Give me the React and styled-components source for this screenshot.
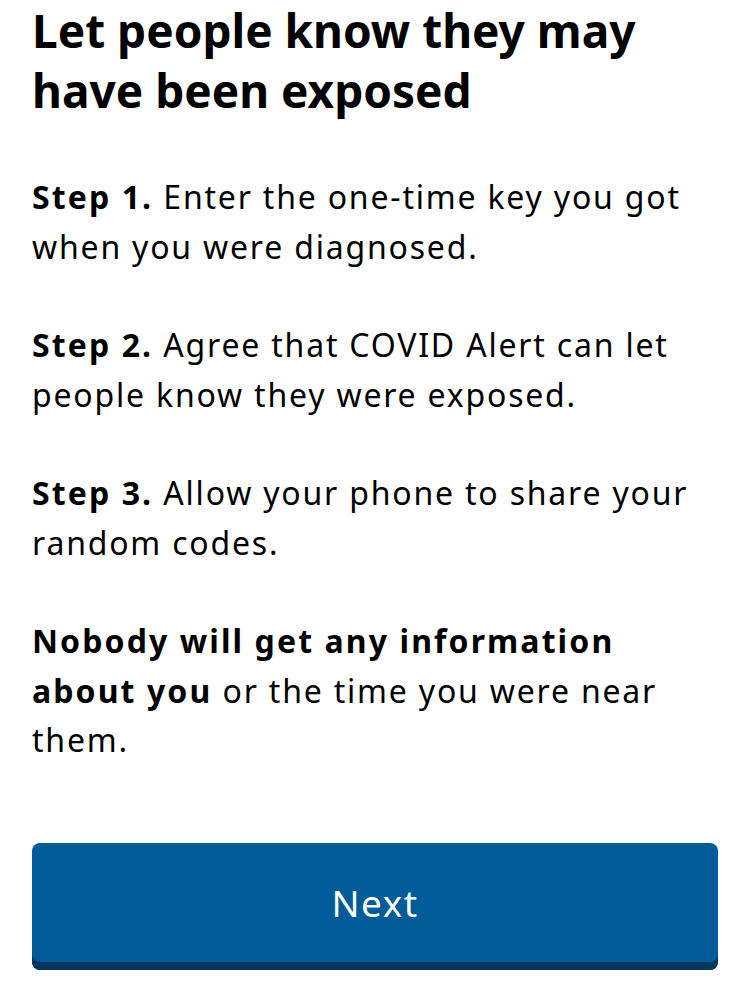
import React from "react";
import styled, { createGlobalStyle } from "styled-components";

const GlobalStyle = createGlobalStyle`
  body {
    margin: 0;
    background: #fff;
    font-family: "Noto Sans", "Open Sans", sans-serif;
    color: #000;
  }
`;

const Screen = styled.div`
  display: flex;
  flex-direction: column;
  padding: 0 32px;
`;

const Title = styled.h1`
  margin: 0;
  font-size: 46px;
  line-height: 60px;
  font-weight: 700;
`;

const Body = styled.div`
  display: flex;
  flex-direction: column;
  gap: 49px;
  margin-top: 52px;
`;

const Paragraph = styled.p`
  margin: 0;
  font-size: 32px;
  line-height: 49.5px;
  letter-spacing: 1.8px;

  strong {
    letter-spacing: 2.1px;
  }
`;

const Button = styled.button`
  margin-top: 78px;
  height: 127px;
  border: none;
  border-radius: 8px;
  background: #005b99;
  box-shadow: inset 0 -8px 0 #00355e;
  color: #fff;
  font-family: inherit;
  font-size: 37px;
  letter-spacing: 1.5px;
  cursor: pointer;
  padding: 0 0 8px;
`;

const steps = [
  ["Step 1.", " Enter the one-time key you got when you were diagnosed."],
  ["Step 2.", " Agree that COVID Alert can let people know they were exposed."],
  ["Step 3.", " Allow your phone to share your random codes."],
  ["Nobody will get any information about you", " or the time you were near them."],
];

export default function App() {
  return (
    <>
      <GlobalStyle />
      <Screen>
        <Title>Let people know they may have been exposed</Title>
        <Body>
          {steps.map(([bold, rest]) => (
            <Paragraph key={bold}>
              <strong>{bold}</strong>
              {rest}
            </Paragraph>
          ))}
        </Body>
        <Button>Next</Button>
      </Screen>
    </>
  );
}
